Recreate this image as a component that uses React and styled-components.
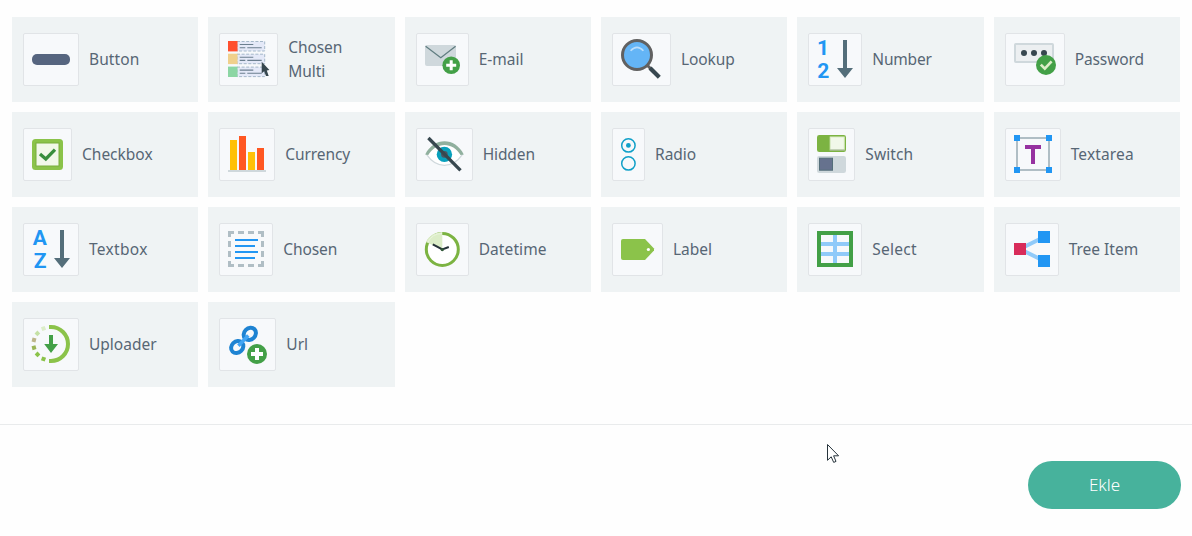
import React from "react";
import styled, { createGlobalStyle } from "styled-components";

const GlobalStyle = createGlobalStyle`
  * { box-sizing: border-box; }
  body {
    margin: 0;
    background: #fefefe;
    color: #576674;
    font-family: "Noto Sans", "Open Sans", sans-serif;
  }
`;

const Page = styled.main`
  display: flex;
  flex-direction: column;
  width: 1192px;
  height: 536px;
  overflow: hidden;
`;

const Palette = styled.section`
  display: grid;
  grid-template-columns: repeat(6, 1fr);
  grid-auto-rows: 85px;
  gap: 10px;
  align-content: start;
  height: 425px;
  padding: 17px 12px 0;
  border-bottom: 1px solid #e9ebec;
`;

const Card = styled.div`
  display: flex;
  align-items: center;
  gap: 10px;
  padding: 0 11px;
  background: #eff3f4;
`;

const IconFrame = styled.span`
  flex: none;
  width: ${(p) => p.$width}px;
  height: 53px;
  border: 1px solid #e1e4e7;
  border-radius: 2px;
  background: #f7f9fb;

  svg {
    display: block;
    width: 100%;
    height: 100%;
  }
`;

const Label = styled.span`
  width: ${(p) => (p.$narrow ? "70px" : "auto")};
  padding-bottom: 2px;
  font-size: 15.5px;
  line-height: 24px;
  letter-spacing: ${(p) => p.$tracking || 0}px;
`;

const Footer = styled.footer`
  display: flex;
  justify-content: flex-end;
  padding: 36px 11px 0;
`;

const AddButton = styled.button`
  width: 153px;
  height: 48px;
  padding: 0 0 2px;
  border: 0;
  border-radius: 24px;
  background: #47b29c;
  color: #fff;
  font-family: inherit;
  font-size: 17px;
  font-weight: 300;
`;

const Pointer = styled.svg`
  position: absolute;
  left: 826px;
  top: 443px;
  width: 14px;
  height: 21px;
`;

const SortArrow = ({ x }) => (
  <path d={`M${x - 2} 7h4v28h6l-8 10l-8 -10h6z`} fill="#546e7a" />
);

const Glyph = ({ x, y, children }) => (
  <text x={x} y={y} textAnchor="middle" fill="#2196f3" fontFamily="Roboto, sans-serif" fontWeight="700" fontSize="21">
    {children}
  </text>
);

const icons = {
  button: <rect x="9" y="21" width="38" height="11" rx="5" fill="#56657f" />,
  chosenMulti: (
    <>
      {[["#ff5030", 8], ["#f0d08c", 20.7], ["#8cd6a4", 33.6]].map(([color, y]) => (
        <g key={y}>
          <rect x="18" y={y + 0.5} width="27.7" height="9.5" fill="#e4e9f8" stroke="#a5b8ca" strokeWidth="1" strokeDasharray="3 1.6" />
          <rect x="9" y={y} width="9.5" height="10.4" fill={color} />
          <path d={`M20.7 ${y + 3.5}h13.6M20.7 ${y + 6.7}h5.6M28.3 ${y + 6.7}h14.4`} stroke="#6b7f8f" strokeWidth="1.1" />
        </g>
      ))}
      <path d="M42.7 28.7V40.3L45.2 38.2L47 43H49.7L47.8 37.4L50.4 37z" fill="#37474f" />
    </>
  ),
  email: (
    <>
      <rect x="9" y="12" width="31" height="21" rx="2" fill="#cfd8dc" />
      <path d="M9.6 13.2L24.8 24.7L39.6 13.2" fill="none" stroke="#607d80" strokeWidth="1.3" />
      <circle cx="35.2" cy="32.3" r="8.8" fill="#43a047" />
      <path d="M35.2 27.3v10M30.2 32.3h10" stroke="#fff" strokeWidth="3" />
    </>
  ),
  lookup: (
    <>
      <path d="M35 32L39 36" stroke="#616161" strokeWidth="3" />
      <path d="M38 35L47.3 44.3" stroke="#37474f" strokeWidth="4.2" />
      <circle cx="25" cy="22" r="14.5" fill="#64b5f6" stroke="#616161" strokeWidth="3" />
      <path d="M18.6 17.8Q25 10.8 31.4 17.8" fill="none" stroke="#bbdefb" strokeWidth="1.7" />
    </>
  ),
  number: (
    <>
      <Glyph x="15" y="22">1</Glyph>
      <Glyph x="15.2" y="45">2</Glyph>
      <SortArrow x={37} />
    </>
  ),
  password: (
    <>
      <rect x="10" y="11" width="38" height="18" rx="0.8" fill="#eceff1" stroke="#cfd8dc" strokeWidth="2" />
      <circle cx="19" cy="20" r="3" fill="#37474f" />
      <circle cx="29" cy="20" r="3" fill="#37474f" />
      <circle cx="39" cy="20" r="3" fill="#37474f" />
      <circle cx="41" cy="32" r="10" fill="#43a047" />
      <path d="M35.8 31.6L39.8 35.6L46.6 28.4" fill="none" stroke="#dcedc8" strokeWidth="2.7" />
    </>
  ),
  checkbox: (
    <>
      <rect x="9" y="11" width="31" height="31" rx="3.5" fill="#8bc34a" />
      <rect x="13" y="15" width="23" height="23" fill="#f1f8e9" stroke="#78ae3c" strokeWidth="1" />
      <path d="M17 26L22.8 31L32 21.6" fill="none" stroke="#388e3c" strokeWidth="3.3" />
    </>
  ),
  currency: (
    <>
      <rect x="11" y="12" width="7" height="30" fill="#ffc107" />
      <rect x="20" y="8" width="7" height="34" fill="#ff5722" />
      <rect x="29" y="24" width="7" height="18" fill="#ffc107" />
      <rect x="38" y="20" width="7" height="22" fill="#ff5722" />
      <rect x="9" y="42" width="38" height="2" fill="#cfd8dc" />
    </>
  ),
  hidden: (
    <>
      <path d="M10.5 26.4Q18 16 28.4 15Q39 16 46.5 26.4Q39 37.3 28.4 37.3Q18 37.3 10.5 26.4z" fill="#fff" stroke="#cfd8dc" strokeWidth="1.2" />
      <path d="M9.2 26.4C18 8.9 39 8.9 47.8 26.4L44.5 27C37 13.5 20 13.5 12.3 27z" fill="#90b09e" />
      <circle cx="28.4" cy="26.4" r="7.7" fill="#08a0bc" />
      <circle cx="28.4" cy="26.4" r="3.3" fill="#4b5563" />
      <path d="M12.4 10L44.5 42.4" stroke="#37474f" strokeWidth="3.3" />
    </>
  ),
  radio: (
    <>
      <circle cx="16.4" cy="17.4" r="6.7" fill="none" stroke="#10a0c8" strokeWidth="1.5" />
      <circle cx="16.4" cy="17.4" r="2.4" fill="#10a0c8" />
      <circle cx="16.4" cy="35.4" r="6.7" fill="none" stroke="#10a0c8" strokeWidth="1.5" />
    </>
  ),
  switch: (
    <>
      <rect x="9" y="7" width="29" height="17" rx="2.3" fill="#7cb342" />
      <rect x="22.2" y="9" width="14" height="13" fill="#f1f8e9" stroke="#dcedc8" />
      <path d="M22 22h14.7" stroke="#8ea080" strokeWidth="0.8" />
      <rect x="9" y="28" width="29" height="17" rx="2.3" fill="#cfd8dc" />
      <rect x="11.5" y="30.2" width="13" height="12" fill="#66728e" stroke="#546e7a" />
    </>
  ),
  textarea: (
    <>
      <rect x="12" y="10" width="32" height="32" fill="none" stroke="#b0bec5" strokeWidth="2" />
      <path d="M9 7h6v6h-6zM41 7h6v6h-6zM9 39h6v6h-6zM41 39h6v6h-6z" fill="#2196f3" />
      <path d="M20 17h16v4h-6v15h-4v-15h-6z" fill="#9632a0" />
    </>
  ),
  textbox: (
    <>
      <Glyph x="16.8" y="22">A</Glyph>
      <Glyph x="17" y="45">Z</Glyph>
      <SortArrow x={39} />
    </>
  ),
  chosen: (
    <>
      <path
        d="M9 14V8h6v3h-3v3zM39 8h6v6h-3v-3h-3zM45 38v6h-6v-3h3v-3zM15 44H9v-6h3v3h3zM19 8h6v3h-6zM29 8h6v3h-6zM19 41h6v3h-6zM29 41h6v3h-6zM9 18h3v6h-3zM9 28h3v6h-3zM42 18h3v6h-3zM42 28h3v6h-3z"
        fill="#b0bec5"
      />
      <path d="M16 17h23M16 23h20M16 29h23M16 35h20" stroke="#2196f3" strokeWidth="2" />
    </>
  ),
  datetime: (
    <>
      <circle cx="26.3" cy="26.4" r="16" fill="#fff" stroke="#7cb342" strokeWidth="3" />
      <path d="M26.3 26.4V8.9A17.5 17.5 0 0 0 9.9 19z" fill="#dcedc8" />
      <path d="M12 19A15.8 15.8 0 0 1 26 10.5" fill="none" stroke="#eef6e4" strokeWidth="0.7" />
      <path d="M16.8 21.3L26.3 26.4L32.8 24" fill="none" stroke="#263238" strokeWidth="2" />
      <circle cx="26.3" cy="26.6" r="1.7" fill="#33593b" />
    </>
  ),
  label: (
    <>
      <path d="M11 16H33L42 25.5V27.5L33 37H11Q9 37 9 35V18Q9 16 11 16z" fill="#8bc34a" />
      <circle cx="36.4" cy="26.5" r="1.6" fill="#fff" />
    </>
  ),
  select: (
    <>
      <path d="M27 10v32M11 21h32M11 31h32" stroke="#90caf9" strokeWidth="4" />
      <rect x="11" y="10" width="32" height="32" fill="none" stroke="#43a047" strokeWidth="4" />
    </>
  ),
  tree: (
    <>
      <path d="M39 14L15 26L39 38" fill="none" stroke="#90caf9" strokeWidth="4" />
      <rect x="9" y="20" width="12" height="12" fill="#d82c5a" />
      <path d="M33 8h12v12h-12zM33 32h12v12h-12z" fill="#2196f3" />
    </>
  ),
  uploader: (
    <>
      <path d="M26 9H28A17 17 0 0 1 28 43H26" fill="none" stroke="#8bc34a" strokeWidth="4" />
      {[
        [20.5, 10.5, "#dcedc8", -20],
        [14.4, 15.4, "#c5e1a5", 45],
        [11, 22, "#bdb58a", 15],
        [11, 29.7, "#9ab556", -15],
        [14.5, 36.4, "#8bc34a", 45],
        [20.5, 41, "#8bc34a", 20],
      ].map(([x, y, color, turn]) => (
        <rect key={y} x={x - 2} y={y - 2} width="4" height="4" fill={color} transform={`rotate(${turn} ${x} ${y})`} />
      ))}
      <path d="M26 17h4v9h5L28 35L21.2 26H26z" fill="#43a047" />
    </>
  ),
  url: (
    <>
      <ellipse cx="18.2" cy="29" rx="6.6" ry="5.6" fill="none" stroke="#1e83d2" strokeWidth="4" transform="rotate(-45 18.2 29)" />
      <ellipse cx="30.8" cy="15.9" rx="6.6" ry="5.6" fill="none" stroke="#1e83d2" strokeWidth="4" transform="rotate(-45 30.8 15.9)" />
      <path d="M19.4 27.7L29.3 17.5" stroke="#42a5f5" strokeWidth="3.5" />
      <circle cx="38" cy="36" r="10" fill="#43a047" />
      <path d="M38 30v12M32 36h12" stroke="#fff" strokeWidth="4" />
    </>
  ),
};

const fields = [
  { label: "Button", icon: "button", width: 56, tracking: 0.1 },
  { label: "Chosen Multi", icon: "chosenMulti", width: 59, narrow: true, tracking: -0.1 },
  { label: "E-mail", icon: "email", width: 53 },
  { label: "Lookup", icon: "lookup", width: 59, tracking: -0.1 },
  { label: "Number", icon: "number", width: 54, tracking: -0.2 },
  { label: "Password", icon: "password", width: 60, tracking: -0.1 },
  { label: "Checkbox", icon: "checkbox", width: 49 },
  { label: "Currency", icon: "currency", width: 56, tracking: -0.1 },
  { label: "Hidden", icon: "hidden", width: 57, tracking: -0.1 },
  { label: "Radio", icon: "radio", width: 33 },
  { label: "Switch", icon: "switch", width: 47, tracking: 0.1 },
  { label: "Textarea", icon: "textarea", width: 56, tracking: 0.15 },
  { label: "Textbox", icon: "textbox", width: 56, tracking: 0.3 },
  { label: "Chosen", icon: "chosen", width: 54, tracking: -0.1 },
  { label: "Datetime", icon: "datetime", width: 53, tracking: 0.1 },
  { label: "Label", icon: "label", width: 51 },
  { label: "Select", icon: "select", width: 54, tracking: 0.25 },
  { label: "Tree Item", icon: "tree", width: 54 },
  { label: "Uploader", icon: "uploader", width: 56 },
  { label: "Url", icon: "url", width: 57 },
];

const FieldCard = ({ field }) => (
  <Card>
    <IconFrame $width={field.width}>
      <svg viewBox={`1 1 ${field.width - 2} 51`} aria-hidden="true">
        {icons[field.icon]}
      </svg>
    </IconFrame>
    <Label $narrow={field.narrow} $tracking={field.tracking}>
      {field.label}
    </Label>
  </Card>
);

export default function App() {
  return (
    <Page>
      <GlobalStyle />
      <Palette>
        {fields.map((field) => (
          <FieldCard key={field.label} field={field} />
        ))}
      </Palette>
      <Footer>
        <AddButton type="button">Ekle</AddButton>
      </Footer>
      <Pointer viewBox="0 0 14 21" aria-hidden="true">
        <path d="M1.5 1.5V17.3L5.2 13.8L7.7 19.4L10 18.4L7.6 12.8H12.6z" fill="#fff" stroke="#27343c" strokeWidth="1" />
      </Pointer>
    </Page>
  );
}
